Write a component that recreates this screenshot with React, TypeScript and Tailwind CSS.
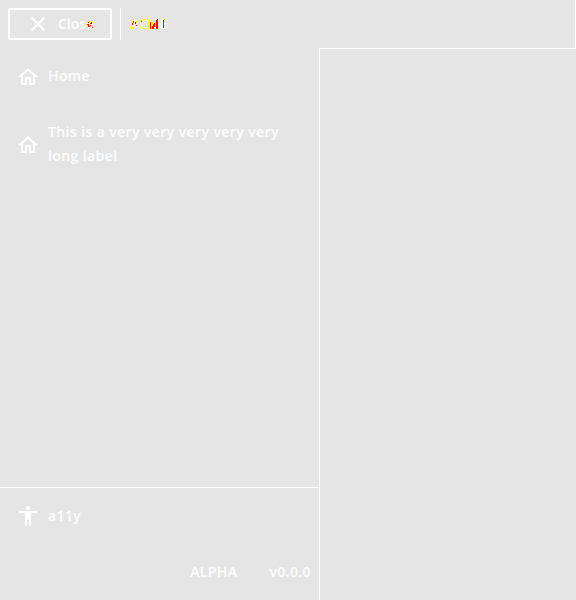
import React from "react";

type Pixel = [number, number, number, number, string];

function Icon({ d, className = "" }: { d: string; className?: string }) {
  return (
    <svg className={`size-6 shrink-0 text-white ${className}`} viewBox="0 0 24 24" fill="currentColor" aria-hidden="true">
      <path d={d} />
    </svg>
  );
}

const CLOSE = "M19 6.41 17.59 5 12 10.59 6.41 5 5 6.41 10.59 12 5 17.59 6.41 19 12 13.41 17.59 19 19 17.59 13.41 12z";
const HOME = "m12 5.69 5 4.5V18h-2v-6H9v6H7v-7.81l5-4.5M12 3 2 12h3v8h6v-6h2v6h6v-8h3L12 3z";
const PERSON = "M12 2c1.1 0 2 .9 2 2s-.9 2-2 2-2-.9-2-2 .9-2 2-2zm9 7h-6v13h-2v-6h-2v6H9V9H3V7h18v2z";

const Y = "#ffff00";
const R = "#ff0000";

const closeMarks: Pixel[] = [
  [2, 0, 4, 1, Y], [1, 1, 1, 1, Y], [6, 1, 1, 1, Y],
  [2, 1, 1, 1, R], [5, 1, 1, 2, R], [0, 3, 1, 2, Y], [3, 1, 1, 1, Y],
  [1, 3, 2, 1, R], [7, 2, 1, 3, Y], [4, 2, 1, 1, R],
  [2, 4, 1, 2, R], [4, 4, 1, 1, R], [1, 6, 1, 1, Y],
  [3, 5, 1, 1, R], [3, 7, 1, 1, Y], [6, 6, 1, 1, R], [7, 7, 1, 1, Y],
];

const brandMarks: Pixel[] = [
  [3, 0, 1, 1, Y], [5, 0, 1, 1, Y], [2, 1, 1, 3, Y], [6, 2, 1, 2, Y], [1, 4, 1, 3, Y],
  [7, 5, 1, 2, Y], [0, 7, 1, 3, Y], [2, 8, 1, 2, Y], [7, 8, 1, 2, Y],
  [3, 2, 1, 2, R], [2, 4, 1, 2, R], [5, 3, 1, 2, R], [6, 6, 1, 1, R],
  [12, 0, 4, 1, Y], [10, 1, 1, 2, Y], [9, 3, 1, 4, Y], [10, 7, 1, 2, Y],
  [12, 9, 4, 1, Y], [17, 0, 1, 1, Y], [11, 3, 1, 3, Y], [11, 2, 1, 1, R],
  [18, 0, 1, 10, Y], [20, 3, 1, 7, R], [21, 0, 1, 3, Y],
  [22, 3, 1, 3, Y], [23, 5, 1, 5, R], [22, 7, 1, 3, R], [24, 4, 1, 4, R],
  [25, 2, 1, 6, Y], [26, 1, 1, 9, R], [27, 0, 1, 10, R], [24, 9, 2, 1, Y],
  [29, 0, 1, 2, Y], [33, 1, 1, 8, R], [34, 0, 1, 1, Y], [37, 9, 1, 1, Y],
];

function Marks({ pixels, className }: { pixels: Pixel[]; className: string }) {
  return (
    <svg className={className} viewBox="0 0 40 10" width="40" height="10" shapeRendering="crispEdges" aria-hidden="true">
      {pixels.map(([x, y, w, h, fill], i) => (
        <rect key={i} x={x} y={y} width={w} height={h} fill={fill} />
      ))}
    </svg>
  );
}

export default function App() {
  return (
    <div className="flex h-[600px] w-[576px] flex-col overflow-hidden bg-[#e5e5e5] font-['Open_Sans','Noto_Sans',sans-serif] text-sm leading-6 font-semibold tracking-[0.4px] text-[#fcfcfc]">
      <header className="flex h-12 shrink-0 items-center border-r border-white pl-2">
        <button className="flex h-8 w-[104px] items-center gap-2 rounded-xs border-2 border-white pl-4">
          <Icon d={CLOSE} />
          <span className="relative tracking-normal">
            Close
            <Marks pixels={closeMarks} className="absolute top-[9px] left-7 max-w-none" />
          </span>
        </button>
        <div className="ml-2 h-8 w-px bg-white" />
        <span className="relative ml-[9px] tracking-[-0.4px] text-white">
          ACME
          <Marks pixels={brandMarks} className="absolute top-[7px] left-0 max-w-none" />
        </span>
      </header>

      <div className="flex min-h-0 flex-1">
        <aside className="flex w-[319px] shrink-0 flex-col">
          <nav className="flex flex-1 flex-col">
            <a className="flex h-14 items-center gap-2 px-4">
              <Icon d={HOME} className="mt-0.5" />
              <span>Home</span>
            </a>
            <a className="flex h-20 items-center gap-2 px-4">
              <Icon d={HOME} className="mt-0.5" />
              <span className="flex-1">This is a very very very very very long label</span>
            </a>
          </nav>
          <footer className="flex h-[113px] flex-col border-t border-white">
            <a className="flex h-14 items-center gap-2 px-4">
              <Icon d={PERSON} />
              <span>a11y</span>
            </a>
            <div className="flex h-14 items-center justify-end gap-8 pr-2">
              <span>ALPHA</span>
              <span>v0.0.0</span>
            </div>
          </footer>
        </aside>
        <main className="flex-1 border-t border-l border-white" />
      </div>
    </div>
  );
}
